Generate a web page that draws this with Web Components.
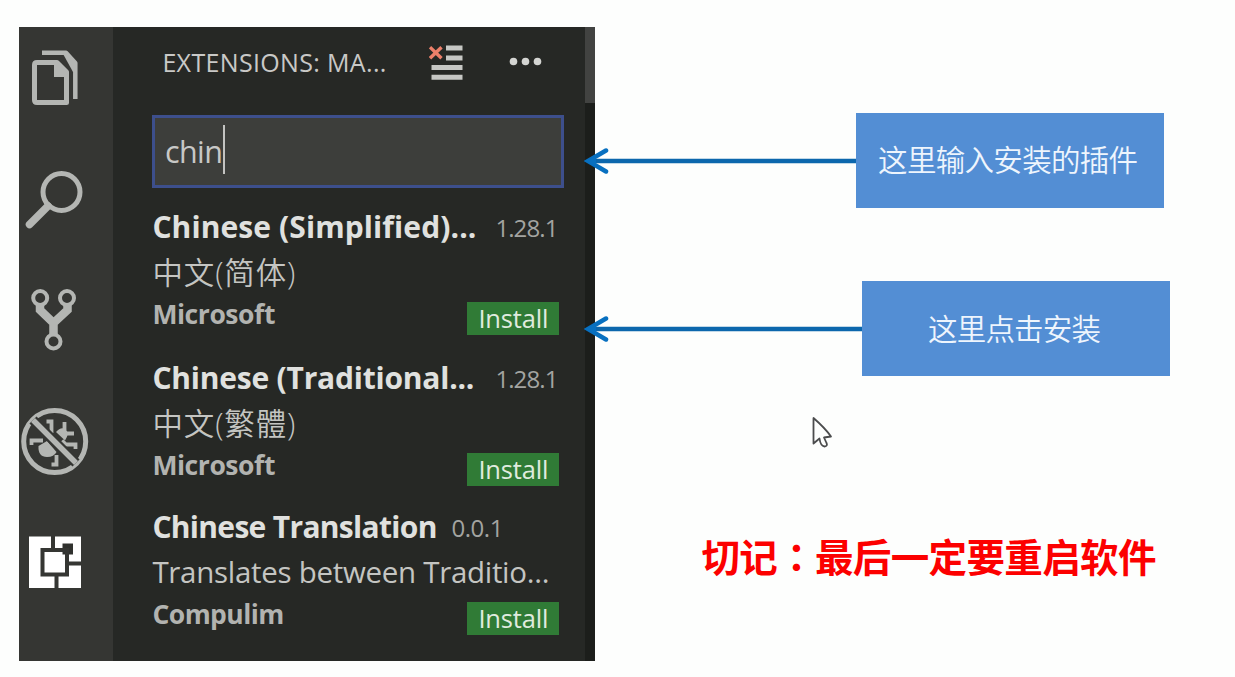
<!DOCTYPE html>
<html lang="zh-CN">
<head>
<meta charset="utf-8">
<title>Extensions</title>
<style>
html,body{margin:0;height:100%;background:#fdfefd;overflow:hidden}
body{font-family:"Open Sans","Noto Sans CJK SC",sans-serif}
</style>
</head>
<body>
<slide-page></slide-page>
<script>
function define(name, html, connected){
  const t=document.createElement('template');
  t.innerHTML=html;
  customElements.define(name, class extends HTMLElement{
    constructor(){super();this.attachShadow({mode:'open'}).append(t.content.cloneNode(true));}
    connectedCallback(){if(connected)connected.call(this,this.shadowRoot);}
  });
}

// Text run whose tracking is adjusted so that it fills the width in "w".
define('fit-text', `<style>:host{display:block;white-space:nowrap;flex:none;line-height:1}span{display:inline-block}</style><span><slot></slot></span>`,
function(root){
  const w=+this.getAttribute('w'), s=root.querySelector('span');
  this.style.width=w+'px';
  const n=[...this.textContent].length;
  s.style.letterSpacing=((w-s.getBoundingClientRect().width)/(n-1))+'px';
});

define('activity-bar', `<style>
:host{display:flex;flex-direction:column;width:94px;flex:none;background:#353633;--c:#b4b6b3}
svg{display:block;flex:none;width:94px;fill:none;stroke:var(--c)}
</style>
<svg height="120" viewBox="19 27 94 120"><path d="M42 52.800H66L75.300 63V99" stroke-width="4.500" stroke-linejoin="round"/><path d="M62 52h5l10 11v9h-4z" fill="#b4b6b3" stroke="none"/><path d="M37 62.500H57L66.500 72V102.500H37Q34.500 102.500 34.500 100V65Q34.500 62.500 37 62.500Z" stroke-width="5" stroke-linejoin="round"/><path d="M54 62h4l9 9v6H54z" fill="#b4b6b3" stroke="none"/></svg>
<svg height="120" viewBox="19 147 94 120"><circle cx="61.500" cy="192" r="18.500" stroke-width="5"/><path d="M48 206L29.500 224.500" stroke-width="7.500" stroke-linecap="round"/></svg>
<svg height="120" viewBox="19 267 94 120"><circle cx="40.200" cy="298" r="7" stroke-width="4"/><circle cx="67" cy="298" r="7" stroke-width="4"/><circle cx="53.500" cy="341.500" r="7" stroke-width="4"/><path d="M40 305V310L53.500 323V334M67.500 305V310L53.500 323" stroke-width="8.500"/></svg>
<svg height="120" viewBox="19 387 94 120"><circle cx="54.700" cy="441.500" r="31" stroke-width="5"/><path d="M38.500 446Q38 457 47 457Q54 457 56.500 452L47 441Z" fill="#b4b6b3" stroke="none"/><path d="M56 432Q61 426 66 429.500Q69.500 434 65 440.500Z" fill="#b4b6b3" stroke="none"/><path d="M46.500 421.500H51.500V433M64.500 422V430M64 433.500H74M62 440.500L66 444.500H75.500V449M31.500 445V440.500H43M56.500 455V464.500H51.500" stroke-width="3.800"/><path d="M33 420L76 463" stroke="#353633" stroke-width="10"/><path d="M33 420L76 463" stroke-width="5.500"/></svg>
<svg height="120" viewBox="19 507 94 120"><path d="M29 536.500H81V588H29z" fill="#fff" stroke="none"/><path d="M62.500 543.500H73V554.500H62.500z" fill="#30312e" stroke="none"/><path d="M42.500 550H67V574.500H42.500zM53 536V550M67 563.500H81M56.500 574.500V588.500" stroke="#353633" stroke-width="4"/></svg>`);

define('panel-header', `<style>
:host{display:flex;align-items:center;height:71px;padding-left:49px;color:#c9c9c7;font-size:25px}
svg{display:block;flex:none}
fit-text{margin-top:-1px}
.clear{margin-left:43px}.more{margin-left:46px}
</style>
<fit-text w="224">EXTENSIONS: MA...</fit-text>
<svg class="clear" width="34" height="38" viewBox="0 0 34 38"><path d="M17 4H33.500M17 14H33.500M2.500 23.500H33.500M2.500 33.200H33.500" stroke="#c6c7c4" stroke-width="5"/><path d="M1 3.200L12.500 14.200M12.500 3.200L1 14.200" stroke="#ed806a" stroke-width="3.400"/></svg>
<svg class="more" width="34" height="38" viewBox="0 0 34 38"><g fill="#d4d5d2"><circle cx="4.500" cy="17.500" r="3.800"/><circle cx="16.500" cy="17.500" r="3.800"/><circle cx="28.500" cy="17.500" r="3.800"/></g></svg>`);

define('search-box', `<style>
:host{display:flex;align-items:center;box-sizing:border-box;width:412px;height:73px;margin:17px 0 0 38.500px;padding-left:10px;border:3px solid #3d4f8c;background:#3d3e3b;color:#c8c8c6;font-size:30.500px}
i{display:block;width:2.500px;height:49px;background:#c3c3c1;margin-top:-4px}
</style><fit-text w="58">chin</fit-text><i></i>`);

define('install-button', `<style>
:host{display:flex;align-items:center;justify-content:center;width:92px;height:33px;background:#307b36;color:#e0ebdf;font-size:25.500px}
</style><fit-text w="70">Install</fit-text>`);

define('extension-item', `<style>
:host{display:block;height:151px;width:407px;margin-left:39px}
.t,.d,.f{display:flex;align-items:center}
.t{height:42px;font-size:30px;font-weight:700;color:#e0e1df}
.t ::slotted([slot=title]){margin-top:-3px}
.t ::slotted([slot=version]){font-size:24px;font-weight:400;color:#a3a4a1}
.t{gap:19px}:host([short]) .t{gap:14px}
.d{height:46px;font-size:29.500px;color:#c4c5c2}
.f{height:43px;justify-content:space-between;font-size:26.500px;font-weight:700;color:#b2b3b0}
.f ::slotted(*){margin-top:-4px}
install-button{font-weight:500;margin-top:4px}
</style>
<div class="t"><slot name="title"></slot><slot name="version"></slot></div>
<div class="d"><slot name="desc"></slot></div>
<div class="f"><slot name="author"></slot><install-button></install-button></div>`);

define('extensions-panel', `<style>
:host{display:flex;width:576px;height:634px;flex:none;margin:27px 0 0 19.400px;background:#262825}
.side{width:472px;flex:none}
.bar{flex:1;background:#1c1e1b}
.thumb{height:76px;background:#424341}
.list{margin-top:19px}
.cjk{font-family:"Open Sans","Noto Sans CJK SC","Noto Sans CJK TC",sans-serif;font-weight:350;font-size:30.500px}
</style>
<activity-bar></activity-bar>
<div class="side">
<panel-header></panel-header>
<search-box></search-box>
<div class="list">
<extension-item><fit-text slot="title" w="324">Chinese (Simplified)...</fit-text><fit-text slot="version" w="63">1.28.1</fit-text><fit-text slot="desc" class="cjk" w="143">中文(简体)</fit-text><fit-text slot="author" w="123">Microsoft</fit-text></extension-item>
<extension-item style="height:149px"><fit-text slot="title" w="322">Chinese (Traditional...</fit-text><fit-text slot="version" style="margin-left:2px" w="63">1.28.1</fit-text><fit-text slot="desc" class="cjk" w="143">中文(繁體)</fit-text><fit-text slot="author" w="123">Microsoft</fit-text></extension-item>
<extension-item short><fit-text slot="title" w="285">Chinese Translation</fit-text><fit-text slot="version" w="52">0.0.1</fit-text><fit-text slot="desc" w="397">Translates between Traditio...</fit-text><fit-text slot="author" w="132">Compulim</fit-text></extension-item>
</div>
</div>
<div class="bar"><div class="thumb"></div></div>`);

// Blue label with an arrow that points left, into the panel.
define('call-out', `<style>
:host{display:flex;align-items:center;height:95px}
svg{flex:1;height:30px;min-width:0}
.box{display:flex;align-items:center;justify-content:center;width:308px;height:95px;flex:none;background:#538ed4;color:#eef5fd;font:350 29.500px "Noto Sans CJK SC",sans-serif}
.box ::slotted(*){margin:-2px 3px 0 0}
</style>
<svg><path d="M6 16H300" stroke="#0c67ad" stroke-width="4.500"/><path d="M22 5.500L4 16L22 26.500" fill="none" stroke="#0870c0" stroke-width="4.500" stroke-linecap="round"/><path d="M1 16L12 10.500V21.500z" fill="#0870c0"/></svg>
<div class="box"><slot></slot></div>`);

define('mouse-pointer', `<style>:host{display:block;position:absolute;left:811px;top:416px}svg{display:block}</style>
<svg width="24" height="36" viewBox="0 0 24 36"><path d="M2.500 2V27.500L8.500 22.500Q9.500 30 13.500 30.500Q17 30 15.500 27L13 21.500L20 20.500Q14 12 2.500 2Z" fill="#fdfefd" stroke="#4b4c4d" stroke-width="1.800" stroke-linejoin="round"/></svg>`);

define('slide-page', `<style>
:host{display:flex;position:relative;width:1235px;height:677px;overflow:hidden;background:#fdfefd}
.notes{width:640px;margin-left:-11.400px;position:relative}
.one{margin-top:112.500px;width:579.600px}
.two{margin-top:73.400px;width:586px}
.warn{margin:160px 0 0 117.400px;color:#fc0000;font:700 38.500px/44px "Noto Sans CJK SC",sans-serif}
</style>
<extensions-panel></extensions-panel>
<div class="notes">
<call-out class="one"><fit-text w="260">这里输入安装的插件</fit-text></call-out>
<call-out class="two"><fit-text w="173">这里点击安装</fit-text></call-out>
<div class="warn"><fit-text w="455">切记<span style="font-family:'Noto Sans CJK TC'" lang="zh-TW">：</span>最后一定要重启软件</fit-text></div>
</div>
<mouse-pointer></mouse-pointer>`);
</script>
</body>
</html>
